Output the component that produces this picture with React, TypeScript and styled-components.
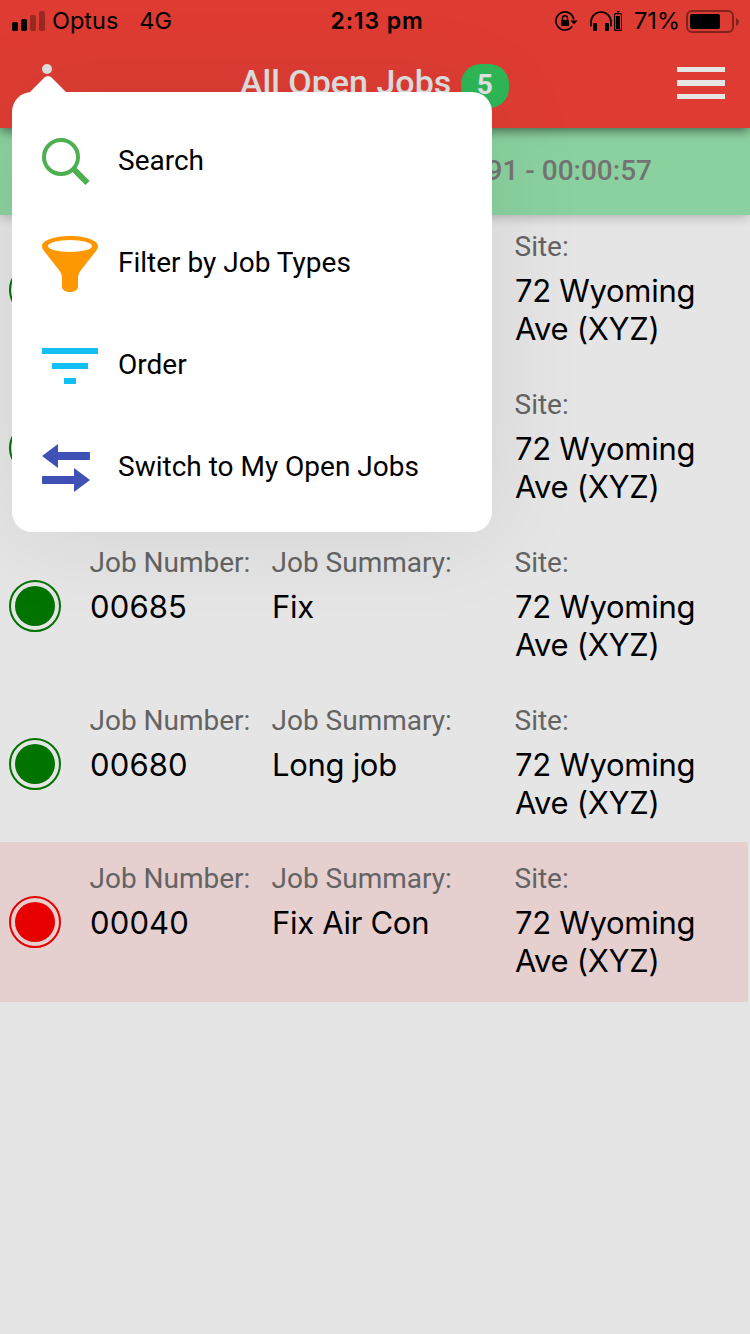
import React from "react";
import styled, { createGlobalStyle } from "styled-components";

const GlobalStyle = createGlobalStyle`
  * { box-sizing: border-box; }
  body { margin: 0; background: #e5e5e5; }
`;

const Screen = styled.div`
  position: relative;
  width: 750px;
  height: 1334px;
  overflow: hidden;
  background: #e5e5e5;
  font-family: Roboto, sans-serif;
  color: #000;
`;

const Header = styled.header`
  position: relative;
  z-index: 3;
  height: 128px;
  background: #de3c33;
  box-shadow: 0 4px 10px -1px rgba(0, 0, 0, 0.5);
`;

const StatusBar = styled.div`
  display: grid;
  grid-template-columns: 1fr auto 1fr;
  align-items: center;
  height: 40px;
  padding: 0 11px 0 12px;
  font-family: Inter, sans-serif;
  line-height: 42px;
`;

const StatusGroup = styled.div<{ $end?: boolean }>`
  display: flex;
  align-items: center;
  justify-content: ${(p) => (p.$end ? "flex-end" : "flex-start")};
  height: 40px;
  svg { flex: none; }
`;

const StatusText = styled.span<{ $ml?: number; $mr?: number }>`
  margin: 0 ${(p) => p.$mr ?? 0}px 0 ${(p) => p.$ml ?? 0}px;
  font-size: 23.5px;
`;

const Clock = styled.span`
  font-weight: 600;
  font-size: 23px;
  letter-spacing: 0.9px;
  margin-left: 3px;
`;

const NavBar = styled.div`
  display: flex;
  align-items: flex-start;
  height: 88px;
  padding: 24px 25px 0 42px;
`;

const MoreDot = styled.i`
  width: 10px;
  height: 10px;
  border-radius: 50%;
  background: #e0e0e0;
`;

const Title = styled.h1`
  margin: -2px 0 0 188px;
  font-size: 34px;
  line-height: 40px;
  font-weight: 500;
  color: #e1e1e1;
  white-space: nowrap;
`;

const Badge = styled.span`
  width: 48px;
  height: 44px;
  margin-left: 10px;
  padding-right: 1px;
  border-radius: 20px;
  background: #2eb757;
  color: #e1e1e1;
  font-size: 28px;
  font-weight: 700;
  line-height: 42px;
  text-align: center;
`;

const MenuButton = styled.div`
  display: flex;
  flex-direction: column;
  gap: 8px;
  width: 48px;
  margin: 3px 0 0 auto;
`;

const MenuLine = styled.i`
  height: 5.4px;
  background: #e5e5e5;
`;

const TimerBar = styled.div`
  position: relative;
  z-index: 2;
  display: flex;
  justify-content: flex-end;
  height: 87px;
  padding-right: 98px;
  background: #8bd19f;
  box-shadow: 0 4px 10px -1px rgba(0, 0, 0, 0.2);
  color: #737373;
  font-size: 28px;
  font-weight: 500;
  line-height: 85px;
`;

const JobList = styled.main`
  margin-top: -5px;
`;

const JobRow = styled.section<{ $alert?: boolean }>`
  display: grid;
  grid-template-columns: 80px 182px 243px 1fr;
  width: 748px;
  height: 160px;
  margin-bottom: -2px;
  padding-left: 9px;
  background: ${(p) => (p.$alert ? "#e5cfcf" : "transparent")};
`;

const Status = styled.i<{ $color: string }>`
  align-self: center;
  width: 52px;
  height: 52px;
  padding: 4px;
  border: 2px solid ${(p) => p.$color};
  border-radius: 50%;
  background: ${(p) => p.$color} content-box;
`;

const Field = styled.div`
  padding-top: 18px;
  white-space: nowrap;
`;

const Label = styled.div`
  font-size: 28px;
  line-height: 38px;
  padding-left: 0.5px;
  color: #636363;
`;

const Value = styled.div<{ $numeric?: boolean }>`
  padding: 6px 0 0 1px;
  font-family: Inter, sans-serif;
  font-size: 31px;
  line-height: 38px;
  letter-spacing: ${(p) => (p.$numeric ? 0.15 : -0.3)}px;
  white-space: pre-line;
`;

const Popover = styled.div`
  position: absolute;
  z-index: 5;
  left: 12px;
  top: 92px;
  width: 480px;
  height: 440px;
  padding: 18px 30px;
  border-radius: 20px;
  background: #fff;
  box-shadow: 0 2px 100px rgba(0, 0, 0, 0.08);
`;

const Arrow = styled.svg`
  position: absolute;
  left: 16px;
  top: -17px;
`;

const MenuItem = styled.div`
  display: flex;
  align-items: center;
  height: 102px;
  font-size: 28px;
  white-space: nowrap;
  svg { flex: none; margin: 2px 20px 0 0; }
`;

const MenuLabel = styled.span`
  padding-bottom: 2px;
`;

const SearchIcon = () => (
  <svg width="56" height="56" viewBox="0 0 56 56">
    <circle cx="19" cy="23" r="17" fill="none" stroke="#4caf50" strokeWidth="4" />
    <path d="M31 34.500 45.500 49" stroke="#4caf50" strokeWidth="6" />
  </svg>
);

const FunnelIcon = () => (
  <svg width="56" height="56" viewBox="0 0 56 56">
    <path d="M28 0C12 0 0 4.500 0 10c0 2 1 3.500 2 5l15 19c2 3 3 5 3 8v9c0 3 4 5 8 5s8-2 8-5v-9c0-3 1-5 3-8l15-19c1-1.500 2-3 2-5C56 4.500 44 0 28 0Z" fill="#ff9800" />
    <ellipse cx="28" cy="10" rx="22" ry="6" fill="#fff" />
  </svg>
);

const OrderIcon = () => (
  <svg width="56" height="56" viewBox="0 0 56 56">
    <path d="M0 10h56v6H0ZM10 25h36v6H10ZM22 40h12v6H22Z" fill="#12c0f5" />
  </svg>
);

const SwitchIcon = () => (
  <svg width="56" height="56" viewBox="0 0 56 56">
    <path d="M0 16 16 4v8h31a1 1 0 0 1 1 1v6a1 1 0 0 1-1 1H16v8ZM48 40 32 28v8H1a1 1 0 0 0-1 1v6a1 1 0 0 0 1 1h31v8Z" fill="#3f51b5" />
  </svg>
);

const Signal = () => (
  <svg width="33" height="20" viewBox="0 0 33 20">
    <rect y="11" width="6" height="9" rx="1.800" />
    <rect x="9" y="8" width="6" height="12" rx="1.800" />
    <rect x="18" y="4" width="6" height="16" rx="1.800" opacity=".3" />
    <rect x="27" width="6" height="20" rx="1.800" opacity=".3" />
  </svg>
);

const LockIcon = () => (
  <svg width="23" height="20" viewBox="0 0 23 20">
    <path d="M18.800 8.500A9 9 0 1 0 17.200 15.300" fill="none" stroke="#000" strokeWidth="1.700" />
    <path d="M15.500 9.500h7.200L19 13.500Z" />
    <rect x="6" y="9" width="8" height="6" rx=".8" />
    <path d="M7.500 9V7.300a2.500 2.500 0 0 1 5 0V9" fill="none" stroke="#000" strokeWidth="1.400" />
  </svg>
);

const HeadphonesIcon = () => (
  <svg width="32" height="20" viewBox="0 0 32 20">
    <path d="M1 15.500V11a10 10 0 0 1 20 0v4.500" fill="none" stroke="#000" strokeWidth="1.700" />
    <rect x="3" y="12" width="4" height="8" rx="1.200" />
    <rect x="15" y="12" width="4" height="8" rx="1.200" />
    <path d="M27 0h2.500v1.400H27Z" />
    <rect x="24.600" y="2.600" width="7" height="16.800" rx="1" fill="none" stroke="#000" strokeWidth="1.200" />
    <rect x="26" y="5" width="4" height="13" />
  </svg>
);

const BatteryIcon = () => (
  <svg width="53" height="23" viewBox="0 0 53 23">
    <rect x="1" y="1" width="46" height="21" rx="5" fill="none" stroke="#000" strokeOpacity=".42" strokeWidth="2" />
    <rect x="4" y="4" width="30" height="15" rx="2" />
    <path d="M50 8c4 1.500 4 6.500 0 8Z" opacity=".42" />
  </svg>
);

const MENU = [
  { label: "Search", Icon: SearchIcon },
  { label: "Filter by Job Types", Icon: FunnelIcon },
  { label: "Order", Icon: OrderIcon },
  { label: "Switch to My Open Jobs", Icon: SwitchIcon },
];

const SITE = "72 Wyoming\nAve (XYZ)";

const JOBS = [
  { id: 1 },
  { id: 2 },
  { id: 3, number: "00685", summary: "Fix" },
  { id: 4, number: "00680", summary: "Long job" },
  { id: 5, number: "00040", summary: "Fix Air Con", alert: true },
];

type JobFieldProps = { label: string; value?: string; numeric?: boolean };

const JobField = ({ label, value, numeric }: JobFieldProps) => (
  <Field>
    {value && (
      <>
        <Label>{label}</Label>
        <Value $numeric={numeric}>{value}</Value>
      </>
    )}
  </Field>
);

export default function App() {
  return (
    <Screen>
      <GlobalStyle />
      <Header>
        <StatusBar>
          <StatusGroup>
            <Signal />
            <StatusText $ml={7}>Optus</StatusText>
            <StatusText $ml={21}>4G</StatusText>
          </StatusGroup>
          <Clock>2:13 pm</Clock>
          <StatusGroup $end>
            <LockIcon />
            <StatusText $ml={12} />
            <HeadphonesIcon />
            <StatusText $ml={12} $mr={6}>71%</StatusText>
            <BatteryIcon />
          </StatusGroup>
        </StatusBar>
        <NavBar>
          <MoreDot />
          <Title>All Open Jobs</Title>
          <Badge>5</Badge>
          <MenuButton>
            <MenuLine />
            <MenuLine />
            <MenuLine />
          </MenuButton>
        </NavBar>
      </Header>
      <TimerBar>91 - 00:00:57</TimerBar>
      <JobList>
        {JOBS.map((job) => (
          <JobRow key={job.id} $alert={job.alert}>
            <Status $color={job.alert ? "#e60000" : "#007300"} />
            <JobField label="Job Number:" value={job.number} numeric />
            <JobField label="Job Summary:" value={job.summary} />
            <JobField label="Site:" value={SITE} />
          </JobRow>
        ))}
      </JobList>
      <Popover>
        <Arrow width="40" height="18" viewBox="0 0 40 18">
          <path d="M1 18 16.500 2.500Q20 -.5 23.500 2.500L39 18Z" fill="#fff" />
        </Arrow>
        {MENU.map(({ label, Icon }) => (
          <MenuItem key={label}>
            <Icon />
            <MenuLabel>{label}</MenuLabel>
          </MenuItem>
        ))}
      </Popover>
    </Screen>
  );
}
